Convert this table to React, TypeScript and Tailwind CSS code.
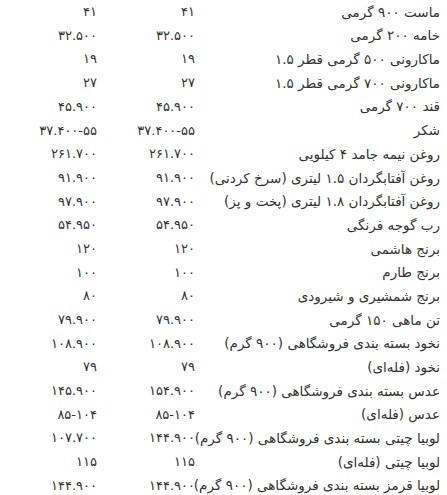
const rows: [string, string, string][] = [
  ['ماست ۹۰۰ گرمی', '۴۱', '۴۱'],
  ['خامه ۲۰۰ گرمی', '۳۲.۵۰۰', '۳۲.۵۰۰'],
  ['ماکارونی ۵۰۰ گرمی قطر ۱.۵', '۱۹', '۱۹'],
  ['ماکارونی ۷۰۰ گرمی قطر ۱.۵', '۲۷', '۲۷'],
  ['قند ۷۰۰ گرمی', '۴۵.۹۰۰', '۴۵.۹۰۰'],
  ['شکر', '۳۷.۴۰۰-۵۵', '۳۷.۴۰۰-۵۵'],
  ['روغن نیمه جامد ۴ کیلویی', '۲۶۱.۷۰۰', '۲۶۱.۷۰۰'],
  ['روغن آفتابگردان ۱.۵ لیتری (سرخ کردنی)', '۹۱.۹۰۰', '۹۱.۹۰۰'],
  ['روغن آفتابگردان ۱.۸ لیتری (پخت و پز)', '۹۷.۹۰۰', '۹۷.۹۰۰'],
  ['رب گوجه فرنگی', '۵۴.۹۵۰', '۵۴.۹۵۰'],
  ['برنج هاشمی', '۱۲۰', '۱۲۰'],
  ['برنج طارم', '۱۰۰', '۱۰۰'],
  ['برنج شمشیری و شیرودی', '۸۰', '۸۰'],
  ['تن ماهی ۱۵۰ گرمی', '۷۹.۹۰۰', '۷۹.۹۰۰'],
  ['نخود بسته بندی فروشگاهی (۹۰۰ گرم)', '۱۰۸.۹۰۰', '۱۰۸.۹۰۰'],
  ['نخود (فله‌ای)', '۷۹', '۷۹'],
  ['عدس بسته بندی فروشگاهی (۹۰۰ گرم)', '۱۵۴.۹۰۰', '۱۴۵.۹۰۰'],
  ['عدس (فله‌ای)', '۸۵-۱۰۴', '۸۵-۱۰۴'],
  ['لوبیا چیتی بسته بندی فروشگاهی (۹۰۰ گرم)', '۱۴۴.۹۰۰', '۱۰۷.۷۰۰'],
  ['لوبیا چیتی (فله‌ای)', '۱۱۵', '۱۱۵'],
  ['لوبیا قرمز بسته بندی فروشگاهی (۹۰۰ گرم)', '۱۴۴.۹۰۰', '۱۴۴.۹۰۰'],
]

export default function App() {
  return (
    <div
      dir="rtl"
      className="w-[447px] bg-white text-[#333] font-['DejaVu_Sans',sans-serif]"
    >
      <div className="grid grid-cols-[245px_98px_1fr]">
        {rows.map(([name, a, b], i) => (
          <div key={i} className="contents">
            <div className="h-[23.7px] pr-[7px] flex items-center whitespace-nowrap text-[13.5px] tracking-[-0.3px]">{name}</div>
            <div className="h-[23.7px] pr-[7px] flex items-center whitespace-nowrap text-[13px]">{a}</div>
            <div className="h-[23.7px] pr-[7px] flex items-center whitespace-nowrap text-[13px]">{b}</div>
          </div>
        ))}
      </div>
    </div>
  )
}
